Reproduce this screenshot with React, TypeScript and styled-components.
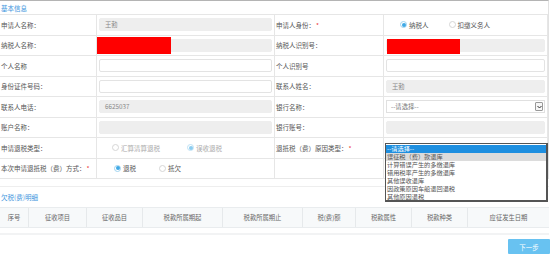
import React from "react";
import styled, { createGlobalStyle } from "styled-components";

const Global = createGlobalStyle`
  html, body { margin: 0; padding: 0; background: #fff; }
  body { font-family: "Noto Sans CJK SC", "Noto Sans", sans-serif; }
  * { box-sizing: border-box; }
`;

const Page = styled.div`
  position: relative;
  width: 554px;
  height: 259px;
  overflow: hidden;
  font-size: 6.5px;
  color: #555;
`;

const BasicBox = styled.div`
  width: 549px;
  border-top: 1px solid #b4b4b4;
  border-right: 1px solid #e2e2e2;
`;

const SectionTitle = styled.div<{ $h: number }>`
  height: ${(p) => p.$h}px;
  display: flex;
  align-items: center;
  padding-left: 1px;
  color: #3d95dd;
  font-size: 6.5px;
`;

const Grid = styled.div`
  display: grid;
  grid-template-columns: 97px 178px 109px 164px;
  grid-auto-rows: 20.5px;
  border-top: 1px solid #e6e6e6;
`;

const Cell = styled.div<{ $label?: boolean }>`
  position: relative;
  display: flex;
  align-items: center;
  border-bottom: 1px solid #e6e6e6;
  border-right: 1px solid #e6e6e6;
  padding: 0 ${(p) => (p.$label ? "1px" : "2px")};
  color: #555;
  white-space: nowrap;
`;

const Star = styled.span`
  color: #e33;
  margin-left: 1px;
`;

const Input = styled.div<{ $gray?: boolean }>`
  width: 100%;
  height: 13px;
  border-radius: 2px;
  background: ${(p) => (p.$gray ? "#eeeeee" : "#fff")};
  border: 1px solid ${(p) => (p.$gray ? "#eeeeee" : "#e3e3e3")};
  color: #888;
  display: flex;
  align-items: center;
  padding-left: 5px;
  font-size: 6.3px;
`;

const Redact = styled.div<{ $l: number; $w: number; $t: number; $h: number }>`
  position: absolute;
  left: ${(p) => p.$l}px;
  top: ${(p) => p.$t}px;
  width: ${(p) => p.$w}px;
  height: ${(p) => p.$h}px;
  background: #ff0000;
`;

const SelectBox = styled.div`
  width: 100%;
  height: 13px;
  border: 1px solid #e0e0e0;
  background: #fff;
  display: flex;
  align-items: center;
  justify-content: space-between;
  padding-left: 4px;
  color: #777;
  font-size: 6.3px;
`;

const Arrow = styled.div`
  width: 8px;
  height: 9px;
  margin-right: 1px;
  border: 1px solid #999;
  border-radius: 1px;
  display: flex;
  align-items: center;
  justify-content: center;
  background: #f6f6f6;
`;

const RadioGroup = styled.div<{ $pad: number; $gap: number }>`
  display: flex;
  align-items: center;
  gap: ${(p) => p.$gap}px;
  padding-left: ${(p) => p.$pad}px;
`;

const RadioItem = styled.label<{ $disabled?: boolean }>`
  display: flex;
  align-items: center;
  gap: 2px;
  color: ${(p) => (p.$disabled ? "#aaa" : "#555")};
`;

const Circle = styled.span<{ $on?: boolean; $disabled?: boolean }>`
  width: 7px;
  height: 7px;
  border-radius: 50%;
  border: 1px solid ${(p) => (p.$on ? (p.$disabled ? "#bfe2f5" : "#9fd3f0") : "#d6d6d6")};
  background: #fff;
  display: flex;
  align-items: center;
  justify-content: center;
  &::after {
    content: "";
    display: ${(p) => (p.$on ? "block" : "none")};
    width: 4px;
    height: 4px;
    border-radius: 50%;
    background: ${(p) => (p.$disabled ? "#8ccdf0" : "#3fa9e6")};
  }
`;

const ListBox = styled.div`
  position: absolute;
  left: 385px;
  top: 143px;
  width: 163px;
  height: 59px;
  border: 1px solid #555;
  border-right-width: 2px;
  border-bottom-width: 2px;
  background: #fff;
  display: flex;
  flex-direction: column;
  padding-top: 1px;
`;

const Option = styled.div<{ $sel?: boolean; $hover?: boolean }>`
  height: 8px;
  line-height: 8px;
  padding-left: 1px;
  font-size: 6.2px;
  white-space: nowrap;
  color: ${(p) => (p.$sel ? "#fff" : "#555")};
  background: ${(p) => (p.$sel ? "#1e8fe0" : p.$hover ? "#dcdcdc" : "transparent")};
`;

const Divider = styled.div`
  margin-top: 7px;
  width: 549px;
  border-top: 1px solid #eeeeee;
`;

const Table = styled.div`
  display: grid;
  grid-template-columns: 29px 58px 56px 80px 80px 53px 56px 56px 81px;
  width: 549px;
  height: 21px;
  background: #f7f9fa;
  border-top: 1px solid #e9ecee;
  border-bottom: 1px solid #e9ecee;
`;

const Th = styled.div<{ $last?: boolean }>`
  display: flex;
  align-items: center;
  justify-content: center;
  border-right: ${(p) => (p.$last ? "none" : "1px solid #e6e9eb")};
  color: #666;
  font-size: 6.3px;
  white-space: nowrap;
`;

const TableFoot = styled.div`
  margin-top: 5px;
  width: 549px;
  border-top: 2px solid #f2f3f4;
`;

const Actions = styled.div`
  display: flex;
  justify-content: flex-end;
  padding-top: 4px;
  width: 550px;
`;

const NextButton = styled.button`
  width: 42px;
  height: 15px;
  border: none;
  border-radius: 1px;
  background: #68c2f1;
  color: #fff;
  font-family: inherit;
  font-size: 6.5px;
  padding: 0;
`;

type R = { label: string; on?: boolean; disabled?: boolean };
const Radios = ({ items, pad, gap }: { items: R[]; pad: number; gap: number }) => (
  <RadioGroup $pad={pad} $gap={gap}>
    {items.map((it) => (
      <RadioItem key={it.label} $disabled={it.disabled}>
        <Circle $on={it.on} $disabled={it.disabled} />
        {it.label}
      </RadioItem>
    ))}
  </RadioGroup>
);

const options = [
  "--请选择--",
  "误征税（费）款退库",
  "计算错误产生的多缴退库",
  "错用税率产生的多缴退库",
  "其他误收退库",
  "因政策原因车船退回退税",
  "其他原因退税",
];

const headers = ["序号", "征收项目", "征收品目", "税款所属期起", "税款所属期止", "税(费)额", "税款属性", "税款种类", "应征发生日期"];

export default function App() {
  return (
    <Page>
      <Global />
      <BasicBox>
        <SectionTitle $h={13}>基本信息</SectionTitle>
        <Grid>
          <Cell $label>申请人名称：</Cell>
          <Cell><Input $gray>王勃</Input></Cell>
          <Cell $label>申请人身份：<Star>*</Star></Cell>
          <Cell>
            <Radios pad={14} gap={20} items={[{ label: "纳税人", on: true }, { label: "扣缴义务人" }]} />
          </Cell>

          <Cell $label>纳税人名称：</Cell>
          <Cell>
            <Input $gray />
            <Redact $l={0} $t={1} $w={74} $h={17} />
          </Cell>
          <Cell $label>纳税人识别号：</Cell>
          <Cell>
            <Input $gray />
            <Redact $l={3} $t={3} $w={73} $h={15} />
          </Cell>

          <Cell $label>个人名称</Cell>
          <Cell><Input /></Cell>
          <Cell $label>个人识别号</Cell>
          <Cell><Input /></Cell>

          <Cell $label>身份证件号码：</Cell>
          <Cell><Input /></Cell>
          <Cell $label>联系人姓名：</Cell>
          <Cell><Input $gray>王勃</Input></Cell>

          <Cell $label>联系人电话：</Cell>
          <Cell><Input $gray>6625037</Input></Cell>
          <Cell $label>银行名称：</Cell>
          <Cell>
            <SelectBox>
              --请选择--
              <Arrow>
                <svg width="5" height="4" viewBox="0 0 5 4">
                  <path d="M0.5 1 L2.5 3 L4.5 1" fill="none" stroke="#333" strokeWidth="1" />
                </svg>
              </Arrow>
            </SelectBox>
          </Cell>

          <Cell $label>账户名称：</Cell>
          <Cell><Input $gray /></Cell>
          <Cell $label>银行账号：</Cell>
          <Cell><Input $gray /></Cell>

          <Cell $label>申请退税类型：</Cell>
          <Cell>
            <Radios pad={13} gap={27} items={[{ label: "汇算清算退税", disabled: true }, { label: "误收退税", on: true, disabled: true }]} />
          </Cell>
          <Cell $label>退抵税（费）原因类型：<Star>*</Star></Cell>
          <Cell />

          <Cell $label>本次申请退抵税（费）方式：<Star>*</Star></Cell>
          <Cell>
            <Radios pad={15} gap={23} items={[{ label: "退税", on: true }, { label: "抵欠" }]} />
          </Cell>
          <Cell $label />
          <Cell />
        </Grid>
      </BasicBox>
      <Divider />
      <SectionTitle $h={20}>欠税(费)明细</SectionTitle>
      <Table>
        {headers.map((h, i) => (
          <Th key={h} $last={i === headers.length - 1}>{h}</Th>
        ))}
      </Table>
      <TableFoot />
      <Actions>
        <NextButton>下一步</NextButton>
      </Actions>
      <ListBox>
        {options.map((o, i) => (
          <Option key={o} $sel={i === 0} $hover={i === 1}>{o}</Option>
        ))}
      </ListBox>
    </Page>
  );
}
